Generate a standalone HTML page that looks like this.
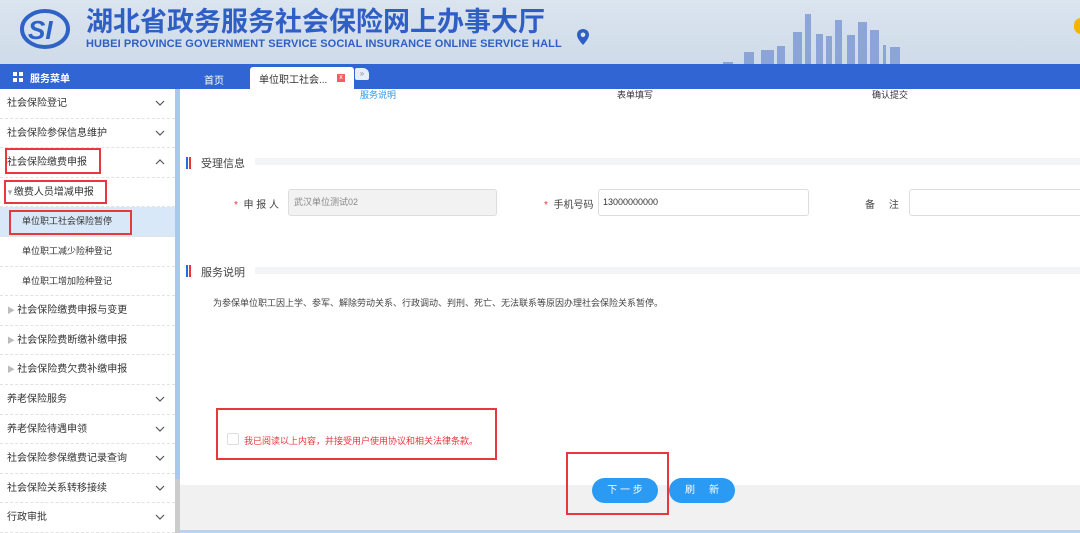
<!DOCTYPE html>
<html><head><meta charset="utf-8"><style>
*{margin:0;padding:0;box-sizing:border-box}
body{width:1080px;height:533px;overflow:hidden;position:relative;background:#fff;font-family:"Liberation Sans","Noto Sans CJK SC",sans-serif;font-size:10px;color:#333}
.abs{position:absolute}
#hdr{left:0;top:0;width:1080px;height:64px;background:linear-gradient(180deg,#dbe4ef,#cfdbe9)}
#nav{left:0;top:64px;width:1080px;height:25px;background:#3165d4}
.side{left:0;top:89px;width:175px;height:444px;background:#fff}
.row{position:absolute;left:0;width:175px;height:29.6px;border-bottom:1px dashed #e2e2e2;line-height:29px;font-size:10px;color:#333;padding-left:7px}
.chev{position:absolute;right:10px;top:11px;width:10px;height:6px}
.rb{border:2px solid #e8383d;position:absolute}
.btn{position:absolute;height:25px;border-radius:13px;background:#2a9af2;color:#fff;font-size:10px;line-height:25px;text-align:center}
</style></head><body>
<svg width="0" height="0" style="position:absolute"><defs>
<symbol id="dn" viewBox="0 0 10 6"><path d="M1 1L5 5L9 1" fill="none" stroke="#555" stroke-width="1.2"/></symbol>
<symbol id="up" viewBox="0 0 10 6"><path d="M1 5L5 1L9 5" fill="none" stroke="#555" stroke-width="1.2"/></symbol></defs></svg>
<div id="hdr" class="abs">
 <svg class="abs" style="left:720px;top:10px" width="220" height="54"><g fill="#7b97d4" opacity=".8">
 <rect x="3" y="52" width="10" height="2"/><rect x="24" y="42" width="10" height="12"/><rect x="41" y="40" width="13" height="14"/><rect x="57" y="36" width="8" height="18"/><rect x="73" y="22" width="9" height="32"/><rect x="85" y="4" width="6" height="50"/><rect x="96" y="24" width="7" height="30"/><rect x="106" y="26" width="6" height="28"/><rect x="115" y="10" width="7" height="44"/><rect x="127" y="25" width="8" height="29"/><rect x="138" y="12" width="9" height="42"/><rect x="150" y="20" width="9" height="34"/><rect x="163" y="35" width="3" height="19"/><rect x="170" y="37" width="10" height="17"/></g></svg>
 <svg class="abs" style="left:20px;top:8px" width="54" height="42"><ellipse cx="25" cy="21" rx="23" ry="18" fill="none" stroke="#2f62c6" stroke-width="4"/><text x="8" y="31" font-size="26" font-weight="bold" font-style="italic" fill="#2f62c6" font-family="Liberation Sans">SI</text></svg>
 <div class="abs" style="left:86px;top:6px;font-size:27px;line-height:32px;font-weight:bold;color:#2f5fc4;white-space:nowrap">湖北省政务服务社会保险网上办事大厅</div>
 <div class="abs" style="left:86px;top:38px;font-size:11px;line-height:13px;font-weight:bold;color:#2f5fc4;white-space:nowrap;letter-spacing:.1px">HUBEI PROVINCE GOVERNMENT SERVICE SOCIAL INSURANCE ONLINE SERVICE HALL</div>
 <svg class="abs" style="left:576px;top:28px" width="14" height="18"><path d="M7 1C3.5 1 1 3.5 1 6.8 1 11 7 17 7 17S13 11 13 6.8C13 3.5 10.5 1 7 1Z" fill="#2f5fc4"/><circle cx="7" cy="6.8" r="2.3" fill="#dbe4ef"/></svg>
 <div class="abs" style="left:1074px;top:18px;width:14px;height:16px;border-radius:7px;background:#f4b400"></div>
</div>
<div id="nav" class="abs">
 <div class="abs" style="left:13px;top:8px;width:10px;height:10px;background:linear-gradient(#fff,#fff) 0 0/4px 4px no-repeat,linear-gradient(#fff,#fff) 6px 0/4px 4px no-repeat,linear-gradient(#fff,#fff) 0 6px/4px 4px no-repeat,linear-gradient(#fff,#fff) 6px 6px/4px 4px no-repeat"></div>
 <div class="abs" style="left:30px;top:6px;color:#fff;font-weight:bold;font-size:10px">服务菜单</div>
 <div class="abs" style="left:204px;top:8px;color:#fff;font-size:10px">首页</div>
 <div class="abs" style="left:250px;top:3px;width:104px;height:22px;background:#fff;border-radius:3px 3px 0 0"></div>
 <div class="abs" style="left:259px;top:7px;color:#333;font-size:10px">单位职工社会...</div>
 <div class="abs" style="left:337px;top:10px;width:8px;height:8px;background:#f06060;color:#fff;font-size:7px;line-height:8px;text-align:center">x</div>
 <div class="abs" style="left:355px;top:4px;width:14px;height:12px;background:#e8eef8;border-radius:2px 6px 2px 2px;font-size:8px;color:#889;text-align:center;line-height:12px">»</div>
</div>
<div class="abs side">
 <div class="row" style="top:0">社会保险登记<svg class="chev"><use href="#dn"/></svg></div>
 <div class="row" style="top:29.6px">社会保险参保信息维护<svg class="chev"><use href="#dn"/></svg></div>
 <div class="row" style="top:59.2px">社会保险缴费申报<svg class="chev"><use href="#up"/></svg></div>
 <div class="row" style="top:88.8px;padding-left:6px"><span style="color:#aaa;font-size:8px">▼</span>缴费人员增减申报</div>
 <div class="row" style="top:118.4px;background:#d9e8f8;padding-left:22px;font-size:9px">单位职工社会保险暂停</div>
 <div class="row" style="top:148px;padding-left:22px;font-size:9px">单位职工减少险种登记</div>
 <div class="row" style="top:177.6px;padding-left:22px;font-size:9px">单位职工增加险种登记</div>
 <div class="row" style="top:207.2px;padding-left:7px"><span style="color:#bbb;font-size:8px">▶ </span>社会保险缴费申报与变更</div>
 <div class="row" style="top:236.8px;padding-left:7px"><span style="color:#bbb;font-size:8px">▶ </span>社会保险费断缴补缴申报</div>
 <div class="row" style="top:266.4px;padding-left:7px"><span style="color:#bbb;font-size:8px">▶ </span>社会保险费欠费补缴申报</div>
 <div class="row" style="top:296px">养老保险服务<svg class="chev"><use href="#dn"/></svg></div>
 <div class="row" style="top:325.6px">养老保险待遇申领<svg class="chev"><use href="#dn"/></svg></div>
 <div class="row" style="top:355.2px">社会保险参保缴费记录查询<svg class="chev"><use href="#dn"/></svg></div>
 <div class="row" style="top:384.8px">社会保险关系转移接续<svg class="chev"><use href="#dn"/></svg></div>
 <div class="row" style="top:414.4px">行政审批<svg class="chev"><use href="#dn"/></svg></div>
</div>
<div class="abs" style="left:175px;top:89px;width:5px;height:444px;background:#ccc"></div>
<div class="abs" style="left:175px;top:89px;width:5px;height:390px;background:#a9c8ee"></div>
<div class="rb" style="left:5px;top:148px;width:96px;height:26px"></div>
<div class="rb" style="left:4px;top:180px;width:103px;height:24px"></div>
<div class="rb" style="left:9px;top:210px;width:123px;height:25px"></div>

<div class="abs" style="left:360px;top:88px;color:#2a9af2;font-size:9px">服务说明</div>
<div class="abs" style="left:617px;top:88px;color:#333;font-size:9px">表单填写</div>
<div class="abs" style="left:872px;top:88px;color:#333;font-size:9px">确认提交</div>

<div class="abs" style="left:186px;top:157px;width:2px;height:12px;background:#2a6be0"></div>
<div class="abs" style="left:189px;top:157px;width:2px;height:12px;background:#e8383d"></div>
<div class="abs" style="left:201px;top:155px;font-size:11px;color:#444">受理信息</div>
<div class="abs" style="left:255px;top:158px;width:825px;height:7px;background:#f3f4f6"></div>
<div class="abs" style="left:234px;top:196px;font-size:10px;color:#444"><span style="color:#e8383d">*</span>&nbsp; 申 报 人</div>
<div class="abs" style="left:288px;top:189px;width:209px;height:27px;background:#f2f2f2;border:1px solid #ddd;border-radius:3px;font-size:9px;color:#888;line-height:25px;padding-left:5px">武汉单位测试02</div>
<div class="abs" style="left:544px;top:196px;font-size:10px;color:#444"><span style="color:#e8383d">*</span>&nbsp; 手机号码</div>
<div class="abs" style="left:598px;top:189px;width:211px;height:27px;background:#fff;border:1px solid #ddd;border-radius:3px;font-size:9px;color:#333;line-height:25px;padding-left:4px">13000000000</div>
<div class="abs" style="left:865px;top:196px;font-size:10px;color:#444">备&nbsp;&nbsp;&nbsp;&nbsp;&nbsp;注</div>
<div class="abs" style="left:909px;top:189px;width:180px;height:27px;background:#fff;border:1px solid #ddd;border-radius:3px"></div>

<div class="abs" style="left:186px;top:265px;width:2px;height:12px;background:#2a6be0"></div>
<div class="abs" style="left:189px;top:265px;width:2px;height:12px;background:#e8383d"></div>
<div class="abs" style="left:201px;top:264px;font-size:11px;color:#444">服务说明</div>
<div class="abs" style="left:255px;top:267px;width:825px;height:7px;background:#f3f4f6"></div>
<div class="abs" style="left:213px;top:296px;font-size:9px;color:#444;white-space:nowrap">为参保单位职工因上学、参军、解除劳动关系、行政调动、判刑、死亡、无法联系等原因办理社会保险关系暂停。</div>

<div class="abs" style="left:180px;top:485px;width:900px;height:48px;background:#f1f1f1"></div>
<div class="abs" style="left:180px;top:530px;width:900px;height:3px;background:#b8d4f0"></div>
<div class="rb" style="left:216px;top:408px;width:281px;height:52px"></div>
<div class="abs" style="left:227px;top:433px;width:12px;height:12px;border:1px solid #ddd;border-radius:2px;background:#fff"></div>
<div class="abs" style="left:244px;top:434px;font-size:9px;color:#e8383d;white-space:nowrap">我已阅读以上内容，并接受用户使用协议和相关法律条款。</div>
<div class="btn" style="left:592px;top:478px;width:66px">下 一 步</div>
<div class="btn" style="left:669px;top:478px;width:66px">刷&nbsp;&nbsp;&nbsp;&nbsp;&nbsp;新</div>
<div class="rb" style="left:566px;top:452px;width:103px;height:63px"></div>
</body></html>
